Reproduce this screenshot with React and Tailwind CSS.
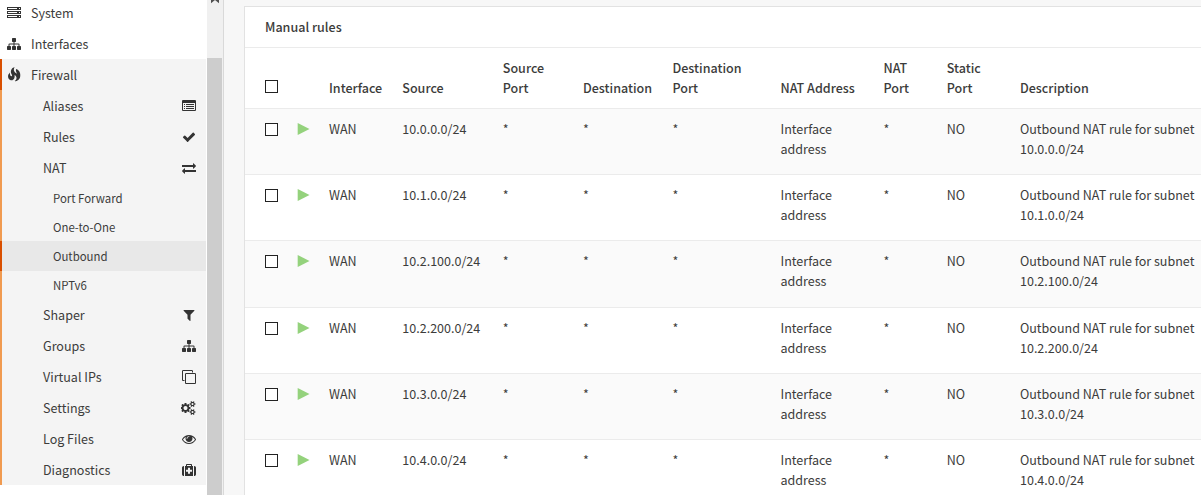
const paths = {
  check: "M1671 566q0 40-28 68l-724 724-136 136q-28 28-68 28t-68-28l-136-136-362-362q-28-28-28-68t28-68l136-136q28-28 68-28t68 28l294 295 656-657q28-28 68-28t68 28l136 136q28 28 28 68z",
  exchange: "M1792 1184v192q0 13-9.5 22.5t-22.5 9.5h-1376v192q0 13-9.5 22.5t-22.5 9.5q-12 0-24-10l-319-320q-9-9-9-22 0-14 9-23l320-320q9-9 23-9 13 0 22.5 9.5t9.5 22.5v192h1376q13 0 22.5 9.5t9.5 22.5zm0-544q0 14-9 23l-320 320q-9 9-23 9-13 0-22.5-9.5t-9.5-22.5v-192h-1376q-13 0-22.5-9.5t-9.5-22.5v-192q0-13 9.5-22.5t22.5-9.5h1376v-192q0-14 9-23t23-9q12 0 24 10l319 319q9 9 9 23z",
  filter: "M1595 295q17 41-14 70l-493 493v742q0 42-39 59-13 5-25 5-27 0-45-19l-256-256q-19-19-19-45v-486l-493-493q-31-29-14-70 17-39 59-39h1280q42 0 59 39z",
  sitemap: "M1792 1248v320q0 40-28 68t-68 28h-320q-40 0-68-28t-28-68v-320q0-40 28-68t68-28h96v-192h-512v192h96q40 0 68 28t28 68v320q0 40-28 68t-68 28h-320q-40 0-68-28t-28-68v-320q0-40 28-68t68-28h96v-192h-512v192h96q40 0 68 28t28 68v320q0 40-28 68t-68 28h-320q-40 0-68-28t-28-68v-320q0-40 28-68t68-28h96v-192q0-52 38-90t90-38h512v-192h-96q-40 0-68-28t-28-68v-320q0-40 28-68t68-28h320q40 0 68 28t28 68v320q0 40-28 68t-68 28h-96v192h512q52 0 90 38t38 90v192h96q40 0 68 28t28 68z",
  clone: "M1664 1632v-1088q0-13-9.5-22.5t-22.5-9.5h-1088q-13 0-22.5 9.5t-9.5 22.5v1088q0 13 9.5 22.5t22.5 9.5h1088q13 0 22.5-9.5t9.5-22.5zm128-1088v1088q0 66-47 113t-113 47h-1088q-66 0-113-47t-47-113v-1088q0-66 47-113t113-47h1088q66 0 113 47t47 113zm-384-384v160h-128v-160q0-13-9.5-22.5t-22.5-9.5h-1088q-13 0-22.5 9.5t-9.5 22.5v1088q0 13 9.5 22.5t22.5 9.5h160v128h-160q-66 0-113-47t-47-113v-1088q0-66 47-113t113-47h1088q66 0 113 47t47 113z",
  eye: "M1664 960q-152-236-381-353 61 104 61 225 0 185-131.5 316.5t-316.5 131.5-316.5-131.5-131.5-316.5q0-121 61-225-229 117-381 353 133 205 333.5 326.5t434.5 121.5 434.5-121.5 333.5-326.5zm-720-384q0-20-14-34t-34-14q-125 0-214.5 89.5t-89.5 214.5q0 20 14 34t34 14 34-14 14-34q0-86 61-147t147-61q20 0 34-14t14-34zm848 384q0 34-20 69-140 230-376.5 368.500t-499.5 138.5-499.5-139-376.5-368q-20-35-20-69t20-69q140-229 376.5-368t499.500-139 499.500 139 376.500 368q20 35 20 69z",
  medkit: "M1280 1088v-192q0-14-9-23t-23-9h-224v-224q0-14-9-23t-23-9h-192q-14 0-23 9t-9 23v224h-224q-14 0-23 9t-9 23v192q0 14 9 23t23 9h224v224q0 14 9 23t23 9h192q14 0 23-9t9-23v-224h224q14 0 23-9t9-23zm-640-704h512v-128h-512v128zm-384 0v1280h-32q-92 0-158-66t-66-158v-832q0-92 66-158t158-66h32zm1152 0v1280h-1024v-1280h128v-160q0-40 28-68t68-28h576q40 0 68 28t28 68v160h128zm384 224v832q0 92-66 158t-158 66h-32v-1280h32q92 0 158 66t66 158z",
  cogs: "M832 896q0-106-75-181t-181-75-181 75-75 181 75 181 181 75 181-75 75-181zm768 512q0-52-38-90t-90-38-90 38-38 90q0 53 37.5 90.5t90.5 37.5 90.5-37.5 37.5-90.5zm0-1024q0-52-38-90t-90-38-90 38-38 90q0 53 37.5 90.5t90.5 37.5 90.5-37.5 37.5-90.5zm-384 421v185q0 10-7 19.5t-16 10.5l-155 24q-11 35-32 76 34 48 90 115 7 11 7 20 0 12-7 19-23 30-82.5 89.5t-78.5 59.500q-11 0-21-7l-115-90q-37 19-77 31-11 108-23 155-7 24-30 24h-186q-11 0-20-7.5t-10-17.5l-23-153q-34-10-75-31l-118 89q-7 7-20 7-11 0-21-8-144-133-144-160 0-9 7-19 10-14 41-53t47-61q-23-44-35-82l-152-24q-10-1-17-9.5t-7-19.5v-185q0-10 7-19.5t16-10.5l155-24q11-35 32-76-34-48-90-115-7-11-7-20 0-12 7-20 22-30 82-89t79-59q11 0 21 7l115 90q34-18 77-32 11-108 23-154 7-24 30-24h186q11 0 20 7.5t10 17.5l23 153q34 10 75 31l118-89q8-7 20-7 11 0 21 8 144 133 144 160 0 8-7 19-12 16-42 54t-45 60q23 48 34 82l152 23q10 2 17 10.5t7 19.5zm640 533v140q0 16-149 31-12 27-30 52 51 113 51 138 0 4-4 7-122 71-124 71-8 0-46-47t-52-68q-20 2-30 2t-30-2q-14 21-52 68t-46 47q-2 0-124-71-4-3-4-7 0-25 51-138-18-25-30-52-149-15-149-31v-140q0-16 149-31 13-29 30-52-51-113-51-138 0-4 4-7 4-2 35-20t59-34 30-16q8 0 46 46.500t52 67.500q20-2 30-2t30 2q51-71 92-112l6-2q4 0 124 70 4 3 4 7 0 25-51 138 17 23 30 52 149 15 149 31zm0-1024v140q0 16-149 31-12 27-30 52 51 113 51 138 0 4-4 7-122 71-124 71-8 0-46-47t-52-68q-20 2-30 2t-30-2q-14 21-52 68t-46 47q-2 0-124-71-4-3-4-7 0-25 51-138-18-25-30-52-149-15-149-31v-140q0-16 149-31 13-29 30-52-51-113-51-138 0-4 4-7 4-2 35-20t59-34 30-16q8 0 46 46.500t52 67.500q20-2 30-2t30 2q51-71 92-112l6-2q4 0 124 70 4 3 4 7 0 25-51 138 17 23 30 52 149 15 149 31z",
};

function Icon({ name }) {
  const wide = name === "cogs";
  return (
    <svg className="block shrink-0" width={wide ? 15 : 14} height="14" viewBox={wide ? "0 0 1920 1792" : "0 0 1792 1792"} fill="#333">
      <path d={paths[name]} />
    </svg>
  );
}

function Servers() {
  return (
    <svg className="block shrink-0" width="14" height="12" viewBox="0 0 14 12" fill="#333">
      <path fillRule="evenodd" d="M0 0h14v3H0zM1 1v1h9V1zM12 1v1h1V1zM0 4h14v3H0zM1 5v1h9V5zM12 5v1h1V5zM0 8h14v3H0zM1 9v1h9V9zM12 9v1h1V9z" />
    </svg>
  );
}

function Flame() {
  return (
    <svg className="block shrink-0" width="14" height="15" viewBox="0 -1240 1200 1286" fill="#333">
      <path transform="scale(1 -1)" d="M653 1231q-39 -67 -54.5 -131t-10.5 -114.5t24.5 -96.5t47.5 -80t63.5 -62.5t68.5 -46.5t65 -30q-4 7 -17.5 35t-18.5 39.5t-17 39.5t-17 43t-13 42t-9.5 44.5t-2 42t4 43t13.5 39t23 38.5q96 -42 165 -107.5t105 -138t52 -156t13 -159t-19 -149.5q-13 -55 -44 -106.5t-68 -87t-78.5 -64.5t-72.5 -45t-53 -22q-72 -22 -127 -11q-31 6 -13 19q6 3 17 7q13 5 32.5 21t41 44t38.5 63.5t21.5 81.500t-6.5 94.5t-50 107t-104 115.500q10 -104 -0.5 -189t-37 -140.5t-65 -93t-84 -52t-93.5 -11t-95 24.5q-80 36 -131.5 114t-53.5 171q-2 23 0 49.5t4.5 52.5t13.5 56t27.5 60t46 64.500t69.5 68.5q-8 -53 -5 -102.5t17.5 -90t34 -68.500t44.500 -39t49 -2q31 13 38.5 36t-4.5 55t-29 64.5t-36 75t-26 75.500q-15 85 2 161.500t53.5 128.500t85.500 92.500t93.500 61t81.500 25.500z" />
    </svg>
  );
}

function ListIcon() {
  return (
    <svg className="block shrink-0" width="14" height="11" viewBox="0 0 14 11" fill="#333">
      <path fillRule="evenodd" d="M1 0h12a1 1 0 0 1 1 1v9a1 1 0 0 1-1 1H1a1 1 0 0 1-1-1V1a1 1 0 0 1 1-1zM1 3v7h12V3zM2 4h1v1H2zM4 4h8v1H4zM2 6h1v1H2zM4 6h8v1H4zM2 8h1v1H2zM4 8h8v1H4z" />
    </svg>
  );
}

function Item({ label, icon }) {
  return (
    <div className="flex h-[31px] items-center justify-between pr-[10px] pl-[41px]">
      <span>{label}</span>
      {icon}
    </div>
  );
}

function SubItem({ label, active }) {
  return (
    <div className={active
      ? "-mb-px -ml-0.5 flex h-[30px] items-center border-l-2 border-[#d94f00] bg-[#e8e8e8] pb-px pl-[51px]"
      : "flex h-[29px] items-center pl-[51px]"}>
      {label}
    </div>
  );
}

function Sidebar() {
  return (
    <aside className="w-[207px] shrink-0 bg-white">
      <div className="flex h-7 items-center gap-[10px] pb-0.5 pl-[7px]"><Servers />System</div>
      <div className="flex h-[31px] items-center gap-[10px] pl-[7px]"><Icon name="sitemap" />Interfaces</div>
      <div className="w-[206px] bg-[#f4f4f4]">
        <div className="flex h-[31px] items-center gap-[10px] border-l-2 border-[#d94f00] pl-[5px]"><Flame />Firewall</div>
        <div className="border-l-2 border-[#f09a50]">
          <Item label="Aliases" icon={<ListIcon />} />
          <Item label="Rules" icon={<Icon name="check" />} />
          <Item label="NAT" icon={<Icon name="exchange" />} />
          <div className="text-[11.4px]">
            <SubItem label="Port Forward" />
            <SubItem label="One-to-One" />
            <SubItem label="Outbound" active />
            <SubItem label="NPTv6" />
          </div>
          <Item label="Shaper" icon={<Icon name="filter" />} />
          <Item label="Groups" icon={<Icon name="sitemap" />} />
          <Item label="Virtual IPs" icon={<Icon name="clone" />} />
          <Item label="Settings" icon={<Icon name="cogs" />} />
          <Item label="Log Files" icon={<Icon name="eye" />} />
          <Item label="Diagnostics" icon={<Icon name="medkit" />} />
        </div>
      </div>
    </aside>
  );
}

function Scrollbar() {
  return (
    <div className="flex w-[17px] shrink-0 flex-col border-r border-[#d9d9d9] bg-[#f0f0f0] pr-px">
      <div className="flex h-[58px] justify-center">
        <svg width="8" height="4" viewBox="0 0 8 4" fill="#505050"><path d="M0 0h8v3.300L4 0 0 3.300z" /></svg>
      </div>
      <div className="flex-1 bg-[#cdcdcd]" />
    </div>
  );
}

function Checkbox() {
  return <span className="block size-[13px] border border-[#222] bg-white" />;
}

const columns = "grid grid-cols-[32px_32px_73.3px_100.5px_80.2px_89.5px_108px_103px_63.3px_73.2px_200px] pl-5";

const rows = [
  { net: "10.0.0.0/24", look: "h-[66px] bg-[#fafafa]" },
  { net: "10.1.0.0/24", look: "h-[66px] bg-white" },
  { net: "10.2.100.0/24", look: "h-[67px] bg-[#fafafa]" },
  { net: "10.2.200.0/24", look: "h-[66px] bg-white" },
  { net: "10.3.0.0/24", look: "h-[66px] bg-[#fafafa]" },
  { net: "10.4.0.0/24", look: "h-[66px] bg-white" },
];

function Row({ net, look }) {
  return (
    <div className={`${columns} ${look} border-t border-[#ebebeb] pt-[10px]`}>
      <span className="pt-1"><Checkbox /></span>
      <span className="pt-1">
        <svg className="block" width="13" height="12" viewBox="0 0 13 12" fill="#94d27c"><path d="M.7 0 12.500 6 .7 12z" /></svg>
      </span>
      <span>WAN</span>
      <span>{net}</span>
      <span>*</span>
      <span>*</span>
      <span>*</span>
      <span>Interface<br />address</span>
      <span>*</span>
      <span>NO</span>
      <span>Outbound NAT rule for subnet<br />{net}</span>
    </div>
  );
}

export default function App() {
  return (
    <div className="flex h-[495px] w-[1201px] overflow-hidden bg-[#f7f7f7] font-['Noto_Sans_CJK_SC',sans-serif] text-[12.54px] leading-5 whitespace-nowrap text-[#3c3c3b]">
      <Sidebar />
      <Scrollbar />
      <main className="min-w-0 flex-1 overflow-hidden pt-1.5 pl-5">
        <section className="border-t border-l border-[#e2e2e2] bg-white">
          <h2 className="flex h-10 items-center pl-5 font-medium">Manual rules</h2>
          <div className={`${columns} h-[61px] items-end border-t border-[#ebebeb] pb-[10px] font-medium`}>
            <span className="pb-[5px]"><Checkbox /></span>
            <span />
            <span>Interface</span>
            <span>Source</span>
            <span>Source<br />Port</span>
            <span>Destination</span>
            <span>Destination<br />Port</span>
            <span>NAT Address</span>
            <span>NAT<br />Port</span>
            <span>Static<br />Port</span>
            <span>Description</span>
          </div>
          {rows.map((row) => <Row key={row.net} {...row} />)}
        </section>
      </main>
    </div>
  );
}
